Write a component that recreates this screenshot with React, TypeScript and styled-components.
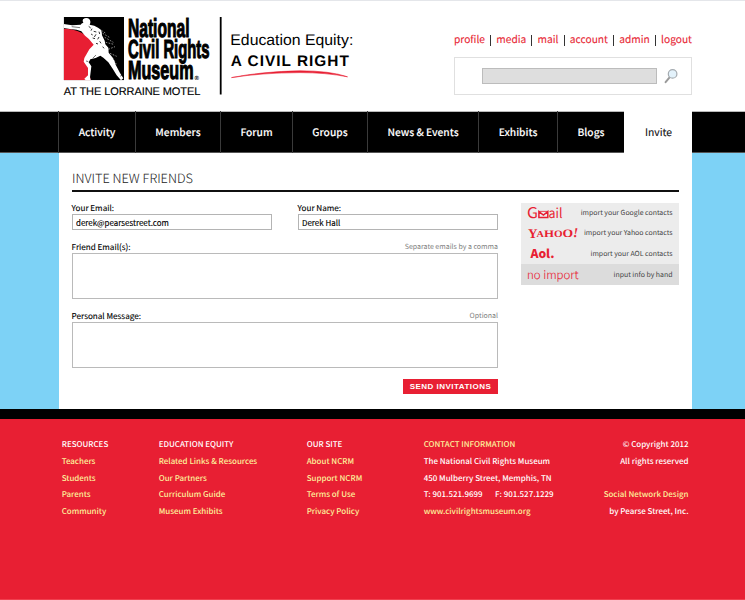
import React from 'react';
import styled, { createGlobalStyle } from 'styled-components';

const RED = '#e81f33';
const BLUE = '#7dd2f6';
const sans = '"Noto Sans CJK SC", "Open Sans", sans-serif';

const GlobalStyle = createGlobalStyle`
  * { box-sizing: border-box; }
  body {
    margin: 0;
    background: #fff;
    font-family: ${sans};
    text-rendering: geometricPrecision;
    -webkit-font-smoothing: antialiased;
  }
  a { color: inherit; text-decoration: none; }
`;

const Page = styled.div`
  width: 745px;
  height: 600px;
  overflow: hidden;
  display: flex;
  flex-direction: column;
`;

/* Header */
const Header = styled.header`
  height: 111px;
  flex: none;
  border-top: 1px solid #e4e6ea;
  padding: 0 53px 0 59px;
  display: flex;
  justify-content: space-between;
`;
const Logo = styled.svg`
  width: 301px;
  height: 100px;
  font-family: "Liberation Sans", Arial, sans-serif;
`;
const Account = styled.div`
  width: 238px;
  padding-top: 30px;
`;
const AccountLinks = styled.nav`
  display: flex;
  justify-content: space-between;
  height: 16px;
  line-height: 16px;
  font-size: 10.2px;
  color: #222;
  -webkit-text-stroke: 0.1px;
  a { color: ${RED}; }
`;
const Bar = styled.i`
  width: 1px;
  height: 11px;
  margin-top: 4px;
  background: #333;
`;
const Search = styled.form`
  height: 38px;
  margin-top: 10px;
  border: 1px solid #e0e0e0;
  display: flex;
  align-items: center;
  padding-left: 27px;
  gap: 7px;
`;
const SearchInput = styled.input`
  width: 175px;
  height: 16px;
  padding: 0 4px;
  border: 1px solid #bcbcbc;
  border-radius: 0;
  background: #dedede;
  outline: 0;
`;

/* Main navigation */
const NavBar = styled.nav`
  flex: none;
  height: 42px;
  padding-left: 58px;
  background: #000;
  box-shadow: inset 0 1px #b9b9b9, inset 0 -1px #555;
  display: grid;
  grid-template-columns: 77px 85px 72px 75px 111px 79px 67px 68px;
`;
const NavItem = styled.a<{ $active?: boolean }>`
  line-height: 42px;
  text-align: center;
  font-size: ${p => (p.$active ? 10.33 : 10.25)}px;
  font-weight: ${p => (p.$active ? 400 : 500)};
  -webkit-text-stroke: 0.1px;
  && { color: ${p => (p.$active ? '#111' : '#fff')}; }
  background: ${p => (p.$active ? '#fff' : 'none')};
  border-left: 1px solid ${p => (p.$active ? '#fff' : '#3a3a3a')};
`;

/* Content */
const Stage = styled.div`
  flex: none;
  height: 256px;
  padding: 0 53px 0 59px;
  background: ${BLUE};
`;
const Content = styled.main`
  height: 256px;
  background: #fff;
  padding: 15px 13px 0;
`;
const Title = styled.h1`
  margin: 0;
  height: 24px;
  line-height: 20px;
  font-size: 12.75px;
  font-weight: 300;
  color: #222;
  border-bottom: 2px solid #101010;
`;
const Columns = styled.div`
  display: flex;
  justify-content: space-between;
  align-items: flex-start;
`;
const Form = styled.form`
  width: 426px;
  padding-top: 10px;
`;
const Pair = styled.div`
  display: grid;
  grid-template-columns: 200px 200px;
  justify-content: space-between;
`;
const Field = styled.label<{ $gap?: number }>`
  display: block;
  margin-top: ${p => p.$gap || 0}px;
`;
const LabelRow = styled.span`
  display: flex;
  justify-content: space-between;
  height: 12px;
  line-height: 14px;
  font-size: 8.12px;
  color: #000;
  margin-left: -0.4px;
  -webkit-text-stroke: 0.12px;
`;
const Hint = styled.span`
  font-size: 7px;
  line-height: 13px;
  color: #808080;
  -webkit-text-stroke: 0;
`;
const Input = styled.input`
  display: block;
  width: 100%;
  height: 16px;
  padding: 0 3px;
  border: 1px solid #b4b4b4;
  border-radius: 0;
  background: #fff;
  font: 400 7.95px/14px ${sans};
  color: #000;
  -webkit-text-stroke: 0.12px;
  outline: 0;
`;
const TextArea = styled.textarea`
  display: block;
  width: 100%;
  height: 46px;
  border: 1px solid #bababa;
  border-radius: 0;
  resize: none;
  outline: 0;
`;
const Submit = styled.button`
  display: block;
  width: 95px;
  height: 15px;
  margin: 11px 0 0 auto;
  padding: 0;
  border: 0;
  background: ${RED};
  color: #fff;
  font: 700 8px/15px "Liberation Sans", Arial, sans-serif;
  letter-spacing: 0.48px;
  white-space: nowrap;
`;

/* Contact import */
const ImportList = styled.aside`
  width: 158px;
  margin-top: 10.5px;
  background: #ececec;
`;
const ImportRow = styled.a<{ $selected?: boolean }>`
  display: flex;
  justify-content: space-between;
  align-items: center;
  height: ${p => (p.$selected ? 21 : 20.5)}px;
  padding: 0 6.5px 0 6px;
  background: ${p => (p.$selected ? '#dcdcdc' : 'none')};
  font-size: 6.95px;
  line-height: 20px;
  && { color: #444; }
`;
const Brand = styled.svg`
  width: 54px;
  height: 20px;
  flex: none;
  margin-right: -10px;
  fill: ${RED};
`;
const NoImport = styled.span`
  font-size: 11.5px;
  font-weight: 300;
  color: ${RED};
  -webkit-text-stroke: 0.1px;
`;

/* Footer */
const Footer = styled.footer`
  flex: 1;
  border-top: 10px solid #000;
  border-bottom: 1px solid #f0404f;
  background: ${RED};
  padding: 17px 56.5px 0 61.7px;
  display: grid;
  grid-template-columns: 97px 148px 117px 150px 1fr;
`;
const FooterCol = styled.div<{ $end?: boolean }>`
  text-align: ${p => (p.$end ? 'right' : 'left')};
`;
const FooterLine = styled.div<{ $accent?: boolean }>`
  height: 16.8px;
  line-height: 18px;
  font-size: 7.94px;
  font-weight: 500;
  white-space: pre;
  color: ${p => (p.$accent ? '#fdf19b' : '#fff')};
`;
const Fax = styled.span`
  margin-left: 12.5px;
`;

const MuseumLogo = () => (
  <Logo viewBox="59 1 301 100">
    <svg x="63.7" y="17" width="60.3" height="63.3" viewBox="11 15 181 190">
      <rect x="11" y="15" width="181" height="190" fill="#000" />
      <path d="M11 50 Q70 50 106 97 L80 145 L92 205 H11Z" fill={RED} />
      <path
        fill="#fff"
        d="M11 36 L36 40 L62 38 Q64 33 70 32 Q66 27 69 22 Q76 16 84 19 Q92 23 91 32 L89 38 Q104 40 114 47 Q124 51 125 59 L126 70 L134 86 L136 97 L145 107 L146 122 L157 136 Q163 145 167 158 L180 183 L190 199 L183 205 Q176 197 170 190 L157 169 L145 151 L130 137 L121 131 Q108 139 91 142 L86 151 L94 163 L90 196 L92 205 L80 205 Q74 203 73 200 L84 190 L84 168 L71 149 L73 138 L88 112 L101 98 Q89 80 75 71 L64 58 Q47 51 34 52 L11 48Z"
      />
      <path
        stroke="#000"
        strokeWidth="2.4"
        fill="none"
        d="M86 43l6 5M96 50l-3 6M101 58l8 2M93 66l5 3M108 67l-5 8M117 59l2 7M98 78l7 2M113 82l4-7M119 88l4 6M108 94l6 2M128 104l4 5"
      />
      <path
        stroke="#fff"
        strokeWidth="1.6"
        strokeDasharray="5 4"
        fill="none"
        d="M128 64l20 12M134 76l26 15M137 91l24 6M145 112l20-8M150 124l20 9M157 137l12 20M124 55l12 8"
      />
      <path stroke="#000" strokeWidth="1.6" fill="none" d="M35 44l25 3M98 139l10-10M78 147l7 2M180 193l7-4" />
    </svg>
    <g fontWeight="700" fontSize="26" stroke="#000" strokeWidth="1.1">
      <text x="128" y="37" textLength="61.5" lengthAdjust="spacingAndGlyphs">National</text>
      <text x="128" y="58" textLength="81.5" lengthAdjust="spacingAndGlyphs">Civil Rights</text>
      <text x="128" y="79.4" textLength="65.5" lengthAdjust="spacingAndGlyphs">Museum</text>
    </g>
    <text x="194.6" y="79.8" fontSize="6" fontWeight="700">®</text>
    <text x="63.8" y="94.7" fontSize="11" textLength="136.5" stroke="#000" strokeWidth="0.15">AT THE LORRAINE MOTEL</text>
    <rect x="219.8" y="17" width="1.8" height="77.5" />
    <text x="230.3" y="45.3" fontSize="15.4" textLength="123" lengthAdjust="spacingAndGlyphs">Education Equity:</text>
    <text x="230.8" y="66" fontSize="15.4" fontWeight="700" textLength="118">A CIVIL RIGHT</text>
    <path
      d="M231.5 77.6 Q262 71.5 300 70.8 Q330 70.8 347.5 76.8 Q326 72.6 300 72.6 Q262 72.8 231.5 77.6Z"
      fill={RED}
      stroke={RED}
      strokeWidth="0.6"
    />
  </Logo>
);

const Magnifier = () => (
  <svg width="15" height="16" viewBox="0 0 15 16">
    <path d="M1.6 14.2L5.6 9.4" stroke="#9a9a9a" strokeWidth="2" strokeLinecap="round" />
    <circle cx="8.6" cy="5.9" r="4.3" fill="#e3f2fb" stroke="#a5abb0" strokeWidth="1.2" />
  </svg>
);

const serif = '"Liberation Serif", "Times New Roman", serif';

const GmailMark = () => (
  <Brand viewBox="0 0 54 20">
    <g fontFamily={sans} fontWeight="400">
      <text x="0" y="15.3" fontSize="14.6" textLength="11" lengthAdjust="spacingAndGlyphs">G</text>
      <text x="21.5" y="15.3" fontSize="13.5" textLength="14" lengthAdjust="spacingAndGlyphs">ail</text>
    </g>
    <path d="M11.9 14.6V8.6L16.4 12L20.8 8.6V14.6Z" fill="none" stroke={RED} strokeWidth="1.5" />
    <path d="M12 8.4h9" stroke={RED} strokeWidth="0.8" />
  </Brand>
);

const YahooMark = () => (
  <Brand viewBox="0 0 54 20">
    <g fontFamily={serif} fontWeight="700">
      <text x="1" y="14.8" fontSize="13.5" textLength="9.5" lengthAdjust="spacingAndGlyphs">Y</text>
      <text x="9.6" y="14" fontSize="9" textLength="7.4" lengthAdjust="spacingAndGlyphs">A</text>
      <text x="17" y="13.6" fontSize="10" textLength="10" lengthAdjust="spacingAndGlyphs">H</text>
      <text x="27" y="13.6" fontSize="10" textLength="8.6" lengthAdjust="spacingAndGlyphs">O</text>
      <text x="35.4" y="13.6" fontSize="11.5" textLength="10.6" lengthAdjust="spacingAndGlyphs">O</text>
      <text x="46" y="13.6" fontSize="13.5" fontStyle="italic" textLength="5.5">!</text>
    </g>
  </Brand>
);

const AolMark = () => (
  <Brand viewBox="0 0 54 20">
    <text x="3.4" y="14.3" fontFamily={sans} fontWeight="900" fontSize="12" textLength="24" lengthAdjust="spacingAndGlyphs">Aol.</text>
  </Brand>
);

const accountLinks = ['profile', 'media', 'mail', 'account', 'admin', 'logout'];
const sections = ['Activity', 'Members', 'Forum', 'Groups', 'News & Events', 'Exhibits', 'Blogs', 'Invite'];
const footerLinks = [
  ['RESOURCES', 'Teachers', 'Students', 'Parents', 'Community'],
  ['EDUCATION EQUITY', 'Related Links & Resources', 'Our Partners', 'Curriculum Guide', 'Museum Exhibits'],
  ['OUR SITE', 'About NCRM', 'Support NCRM', 'Terms of Use', 'Privacy Policy'],
];

export default function App() {
  return (
    <Page>
      <GlobalStyle />
      <Header>
        <MuseumLogo />
        <Account>
          <AccountLinks>
            {accountLinks.map((label, i) => (
              <React.Fragment key={label}>
                {i > 0 && <Bar />}
                <a href="#">{label}</a>
              </React.Fragment>
            ))}
          </AccountLinks>
          <Search>
            <SearchInput aria-label="Search" />
            <Magnifier />
          </Search>
        </Account>
      </Header>
      <NavBar>
        {sections.map(name => (
          <NavItem key={name} href="#" $active={name === 'Invite'}>
            {name}
          </NavItem>
        ))}
      </NavBar>
      <Stage>
        <Content>
          <Title>INVITE NEW FRIENDS</Title>
          <Columns>
            <Form>
              <Pair>
                <Field>
                  <LabelRow>Your Email:</LabelRow>
                  <Input defaultValue="derek@pearsestreet.com" />
                </Field>
                <Field>
                  <LabelRow>Your Name:</LabelRow>
                  <Input defaultValue="Derek Hall" />
                </Field>
              </Pair>
              <Field $gap={11}>
                <LabelRow>
                  Friend Email(s):<Hint>Separate emails by a comma</Hint>
                </LabelRow>
                <TextArea />
              </Field>
              <Field $gap={11}>
                <LabelRow>
                  Personal Message:<Hint>Optional</Hint>
                </LabelRow>
                <TextArea />
              </Field>
              <Submit type="button">SEND INVITATIONS</Submit>
            </Form>
            <ImportList>
              <ImportRow href="#"><GmailMark />import your Google contacts</ImportRow>
              <ImportRow href="#"><YahooMark />import your Yahoo contacts</ImportRow>
              <ImportRow href="#"><AolMark />import your AOL contacts</ImportRow>
              <ImportRow href="#" $selected><NoImport>no import</NoImport>input info by hand</ImportRow>
            </ImportList>
          </Columns>
        </Content>
      </Stage>
      <Footer>
        {footerLinks.map(([heading, ...links]) => (
          <FooterCol key={heading}>
            <FooterLine>{heading}</FooterLine>
            {links.map(link => (
              <FooterLine key={link} $accent><a href="#">{link}</a></FooterLine>
            ))}
          </FooterCol>
        ))}
        <FooterCol>
          <FooterLine $accent>CONTACT INFORMATION</FooterLine>
          <FooterLine>The National Civil Rights Museum</FooterLine>
          <FooterLine>450 Mulberry Street, Memphis, TN</FooterLine>
          <FooterLine>T: 901.521.9699<Fax>F: 901.527.1229</Fax></FooterLine>
          <FooterLine $accent><a href="#">www.civilrightsmuseum.org</a></FooterLine>
        </FooterCol>
        <FooterCol $end>
          <FooterLine>© Copyright 2012</FooterLine>
          <FooterLine>All rights reserved</FooterLine>
          <FooterLine> </FooterLine>
          <FooterLine $accent><a href="#">Social Network Design</a></FooterLine>
          <FooterLine>by Pearse Street, Inc.</FooterLine>
        </FooterCol>
      </Footer>
    </Page>
  );
}
